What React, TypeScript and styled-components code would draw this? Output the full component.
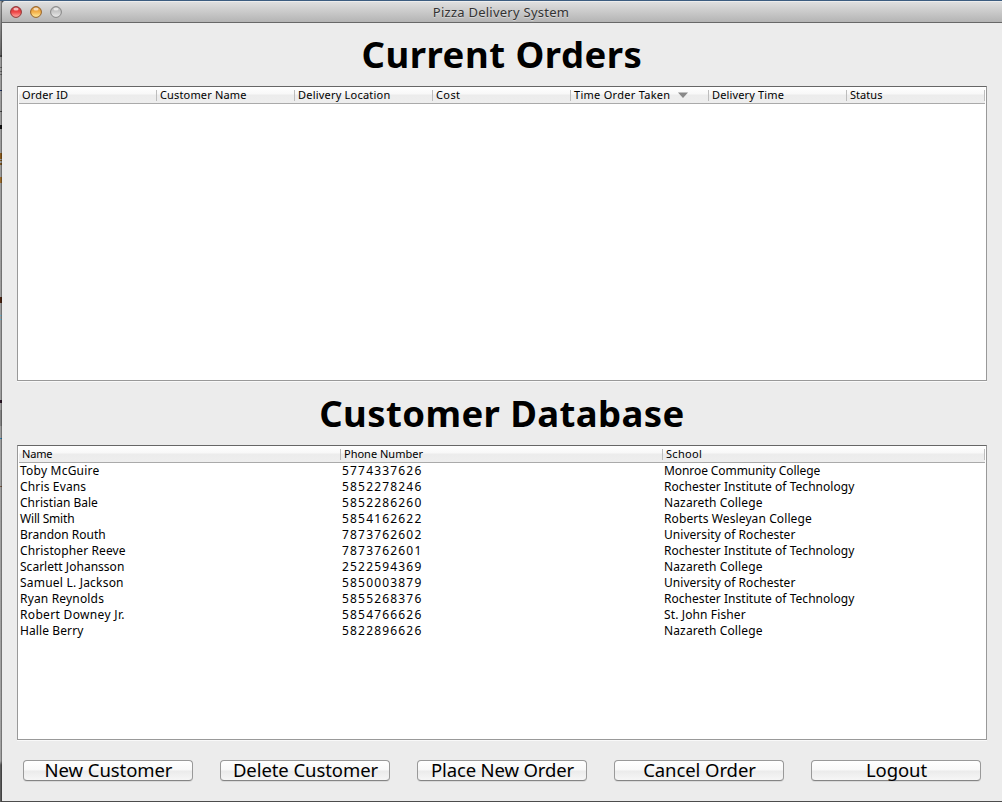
import React from "react";
import styled, { createGlobalStyle } from "styled-components";

const GlobalStyle = createGlobalStyle`
  *, *::before, *::after { box-sizing: border-box; }
  body {
    margin: 0;
    overflow: hidden;
    background: #9b9b9b;
    font-family: "Lucida Grande", "Noto Sans", "Open Sans", sans-serif;
    color: #000;
  }
`;

const Desktop = styled.div`
  display: flex;
  width: 1002px;
  height: 802px;
  padding-top: 1px;
  background: linear-gradient(#3d5d80 1px, #4c4c4c 1px);
`;

const DesktopEdge = styled.div`
  flex: none;
  width: 2px;
  border-right: 1px solid rgba(0, 0, 0, 0.28);
  background:
    linear-gradient(#444, #444) 0 54px / 2px 2px no-repeat,
    linear-gradient(#666, #666) 0 66px / 2px 1px no-repeat,
    linear-gradient(#666, #666) 0 70px / 2px 1px no-repeat,
    linear-gradient(#666, #666) 0 73px / 2px 1px no-repeat,
    linear-gradient(#1d2f60, #1d2f60) 0 89px / 2px 1px no-repeat,
    linear-gradient(#444, #444) 0 110px / 2px 1px no-repeat,
    linear-gradient(#111, #111) 0 124px / 2px 4px no-repeat,
    linear-gradient(#8a5a1c, #8a5a1c) 0 152px / 2px 6px no-repeat,
    linear-gradient(#7a5520, #7a5520) 0 159px / 2px 1px no-repeat,
    linear-gradient(#7a5520, #7a5520) 0 162px / 2px 2px no-repeat,
    linear-gradient(#9c6c2c, #9c6c2c) 0 176px / 2px 6px no-repeat,
    linear-gradient(#4a2412, #4a2412) 0 296px / 2px 6px no-repeat,
    linear-gradient(#6cb0c8, #6cb0c8) 0 314px / 2px 1px no-repeat,
    linear-gradient(#6cb0c8, #6cb0c8) 0 318px / 2px 1px no-repeat,
    linear-gradient(#2a1626, #2a1626) 0 399px / 2px 3px no-repeat,
    linear-gradient(#858585, #858585) 0 409px / 2px 16px no-repeat,
    linear-gradient(#2f80b0, #2f80b0) 0 437px / 2px 1px no-repeat,
    linear-gradient(#7a5a44, #7a5a44) 0 485px / 2px 1px no-repeat,
    linear-gradient(#aaa 0, #666 54px, #9c9c9c 56px, #a2a2a2 760px, #5c5c5c 764px);
`;

const Window = styled.div`
  display: flex;
  flex-direction: column;
  width: 1000px;
  height: 800px;
  background: #ececec;
  border-top-left-radius: 4px;
  overflow: hidden;
`;

const TitleBar = styled.header`
  display: grid;
  grid-template-columns: 1fr auto 1fr;
  align-items: center;
  flex: none;
  height: 22px;
  padding: 0 10px 0 8px;
  border-top: 1px solid #ededed;
  border-bottom: 1px solid #686868;
  background: linear-gradient(#dfdfdf, #b4b4b4);
`;

const Lights = styled.div`
  display: flex;
  gap: 8px;
  height: 12px;
`;

const WindowTitle = styled.div`
  padding-top: 1px;
  font-size: 13px;
  line-height: 19px;
  letter-spacing: 0.25px;
  color: #333;
  text-shadow: 0 1px 0 rgba(255, 255, 255, 0.4);
  white-space: nowrap;
`;

const Content = styled.main`
  display: flex;
  flex-direction: column;
  padding: 0 15px;
`;

const Heading = styled.h1<{ $track: number }>`
  margin: 0;
  height: 63px;
  font-size: 36.5px;
  font-weight: 700;
  line-height: 62px;
  letter-spacing: ${(p) => p.$track}px;
  text-align: center;
  white-space: nowrap;
`;

const TableFrame = styled.section`
  height: 295px;
  padding: 0 1px;
  border: 1px solid #999;
  border-top-color: #666;
  background: #fff;
  box-shadow: 0 1px 0 #f9f9f9;

  & + h1 {
    height: 64px;
    line-height: 65px;
  }
`;

const HeaderRow = styled.div<{ $columns: number }>`
  display: grid;
  grid-template-columns: repeat(${(p) => p.$columns}, 1fr);
  height: 17px;
  border-bottom: 1px solid #aaa;
  background: linear-gradient(#fff 0, #f8f8f8 7px, #ececec 8px, #eee 16px);
`;

const HeaderCell = styled.div<{ $track: number }>`
  display: flex;
  align-items: center;
  padding-left: 3px;
  font-size: 11px;
  line-height: 16px;
  letter-spacing: ${(p) => p.$track}px;
  white-space: nowrap;
  background: linear-gradient(#bdbdbd, #bdbdbd) right 3px / 1px 11px no-repeat;
`;

const SortMark = styled.svg`
  margin: 0 0 1px 8px;
`;

const Row = styled.div`
  display: grid;
  grid-template-columns: repeat(3, 1fr);
  height: 16px;
`;

const Cell = styled.div<{ $track: number }>`
  padding-left: 1px;
  font-size: 12px;
  line-height: 16px;
  letter-spacing: ${(p) => p.$track}px;
  white-space: nowrap;
`;

const Actions = styled.footer`
  display: flex;
  gap: 27px;
  padding: 20px 6px 0;
`;

const ActionButton = styled.button<{ $track: number }>`
  display: flex;
  align-items: center;
  justify-content: center;
  width: 170px;
  height: 21px;
  padding: 0 0 2px 1px;
  border: 1px solid #999;
  border-bottom-color: #858585;
  border-radius: 4px;
  background: linear-gradient(#fff 0, #f8f8f8 9px, #ebebeb 10px, #f6f6f6 19px);
  box-shadow: 0 1px 0 rgba(0, 0, 0, 0.08);
  color: #000;
  font-family: inherit;
  font-size: 18.5px;
  line-height: 19px;
  letter-spacing: ${(p) => p.$track}px;
  white-space: nowrap;
`;

type Tracked = [label: string, track: number];

const orderColumns: Tracked[] = [
  ["Order ID", 0.15], ["Customer Name", 0.15], ["Delivery Location", 0.21], ["Cost", 0.4],
  ["Time Order Taken", 0.28], ["Delivery Time", 0.15], ["Status", 0.05],
];
const customerColumns: Tracked[] = [["Name", -0.2], ["Phone Number", 0], ["School", 0.3]];

const RIT: Tracked = ["Rochester Institute of Technology", 0.04];
const NAZARETH: Tracked = ["Nazareth College", 0.13];
const UR: Tracked = ["University of Rochester", 0.04];

const customers: [Tracked, string, Tracked][] = [
  [["Toby McGuire", 0.22], "5774337626", ["Monroe Community College", -0.08]],
  [["Chris Evans", 0.15], "5852278246", RIT],
  [["Christian Bale", 0], "5852286260", NAZARETH],
  [["Will Smith", -0.18], "5854162622", ["Roberts Wesleyan College", 0.1]],
  [["Brandon Routh", 0], "7873762602", UR],
  [["Christopher Reeve", 0.12], "7873762601", RIT],
  [["Scarlett Johansson", 0.02], "2522594369", NAZARETH],
  [["Samuel L. Jackson", 0.21], "5850003879", UR],
  [["Ryan Reynolds", 0.17], "5855268376", RIT],
  [["Robert Downey Jr.", 0.33], "5854766626", ["St. John Fisher", 0.12]],
  [["Halle Berry", 0.1], "5822896626", NAZARETH],
];

const actions: Tracked[] = [
  ["New Customer", -0.07], ["Delete Customer", -0.07], ["Place New Order", -0.14],
  ["Cancel Order", -0.07], ["Logout", -0.1],
];

function Light({ id, rim, top, mid, glow }: { id: string; rim: string; top: string; mid: string; glow: string }) {
  return (
    <svg width="12" height="12" viewBox="0 0 12 12">
      <defs>
        <linearGradient id={id} x1="0" y1="0" x2="0" y2="1">
          <stop offset="0" stopColor={top} />
          <stop offset="0.5" stopColor={mid} />
          <stop offset="1" stopColor={glow} />
        </linearGradient>
      </defs>
      <circle cx="6" cy="6" r="5.4" fill={`url(#${id})`} stroke={rim} strokeWidth="1" />
      <ellipse cx="6" cy="3" rx="2.6" ry="1.5" fill="#fff" opacity="0.65" />
    </svg>
  );
}

export default function App() {
  return (
    <Desktop>
      <GlobalStyle />
      <DesktopEdge />
      <Window>
        <TitleBar>
          <Lights>
            <Light id="close" rim="#8e3434" top="#c8373a" mid="#ee4546" glow="#ffb0a8" />
            <Light id="minimize" rim="#946024" top="#d08a35" mid="#f4b14a" glow="#fff0a4" />
            <Light id="zoom" rim="#858585" top="#b0b0b0" mid="#c9c9c9" glow="#ececec" />
          </Lights>
          <WindowTitle>Pizza Delivery System</WindowTitle>
        </TitleBar>
        <Content>
          <Heading $track={0.5}>Current Orders</Heading>
          <TableFrame>
            <HeaderRow $columns={7}>
              {orderColumns.map(([label, track]) => (
                <HeaderCell key={label} $track={track}>
                  {label}
                  {label === "Time Order Taken" && (
                    <SortMark width="10" height="6" viewBox="0 0 10 6">
                      <path d="M0 0.5h10L5 6z" fill="#888" />
                    </SortMark>
                  )}
                </HeaderCell>
              ))}
            </HeaderRow>
          </TableFrame>
          <Heading $track={0.4}>Customer Database</Heading>
          <TableFrame>
            <HeaderRow $columns={3}>
              {customerColumns.map(([label, track]) => (
                <HeaderCell key={label} $track={track}>{label}</HeaderCell>
              ))}
            </HeaderRow>
            {customers.map(([name, phone, school]) => (
              <Row key={phone}>
                <Cell $track={name[1]}>{name[0]}</Cell>
                <Cell $track={1.18}>{phone}</Cell>
                <Cell $track={school[1]}>{school[0]}</Cell>
              </Row>
            ))}
          </TableFrame>
          <Actions>
            {actions.map(([label, track]) => (
              <ActionButton key={label} $track={track}>{label}</ActionButton>
            ))}
          </Actions>
        </Content>
      </Window>
    </Desktop>
  );
}
